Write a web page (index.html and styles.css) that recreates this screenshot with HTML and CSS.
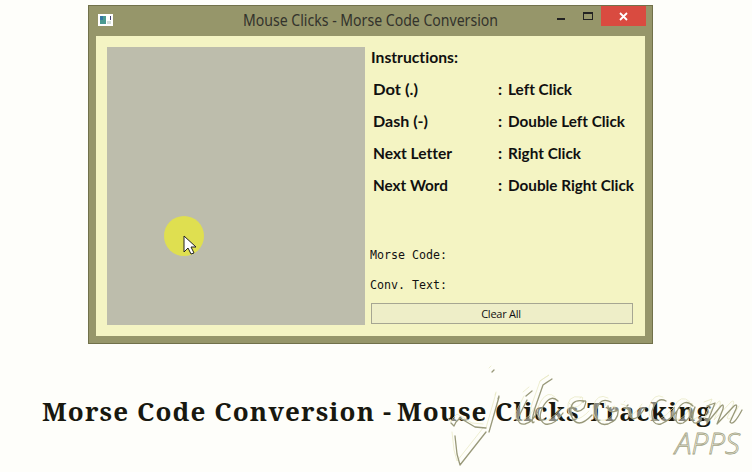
FILE: index.html
```html
<!DOCTYPE html>
<html lang="en">
<head>
<meta charset="utf-8">
<title>Mouse Clicks - Morse Code Conversion</title>
<link rel="stylesheet" href="styles.css">
</head>
<body>
<main class="page">
  <section class="window">
    <header class="titlebar">
      <svg class="app-icon" width="15" height="12" viewBox="0 0 15 12"><path fill="#fff" d="M0 0h15v12H0z"/><path fill="#4b9a91" d="M2 2h6v8H2z"/><path fill="#3677a3" d="M2 2h3v4H2z"/><path fill="#d5dfdc" d="M9 7h4v3H9z"/><path fill="#447" d="M12 2h1v4h-1z"/></svg>
      <h1 class="title"><svg width="264" height="27"><text x="0" y="17" textLength="255" lengthAdjust="spacingAndGlyphs">Mouse Clicks - Morse Code Conversion</text></svg></h1>
      <div class="controls">
        <span class="minimize"></span><span class="maximize"></span>
        <span class="close"><svg width="9" height="9" viewBox="0 0 9 9"><path d="M1 1l7 7M8 1L1 8" stroke="#fff" stroke-width="1.8"/></svg></span>
      </div>
    </header>
    <div class="client">
      <div class="click-area">
        <div class="pointer"><svg width="14" height="20" viewBox="0 0 14 20"><path d="M1 1v16l4-4 3 6 3-1-3-6h5z" fill="#fff" stroke="#222" stroke-width="1"/></svg></div>
      </div>
      <div class="side">
        <svg class="instructions" width="270" height="160">
          <text x="1" y="16" textLength="87" lengthAdjust="spacingAndGlyphs">Instructions:</text>
          <text x="3" y="48" textLength="45" lengthAdjust="spacingAndGlyphs">Dot (.)</text><text x="128" y="48">:</text><text x="138" y="48" textLength="64" lengthAdjust="spacingAndGlyphs">Left Click</text>
          <text x="3" y="80" textLength="55" lengthAdjust="spacingAndGlyphs">Dash (-)</text><text x="128" y="80">:</text><text x="138" y="80" textLength="117" lengthAdjust="spacingAndGlyphs">Double Left Click</text>
          <text x="3" y="112" textLength="79" lengthAdjust="spacingAndGlyphs">Next Letter</text><text x="128" y="112">:</text><text x="138" y="112" textLength="73" lengthAdjust="spacingAndGlyphs">Right Click</text>
          <text x="3" y="144" textLength="75" lengthAdjust="spacingAndGlyphs">Next Word</text><text x="128" y="144">:</text><text x="138" y="144" textLength="126" lengthAdjust="spacingAndGlyphs">Double Right Click</text>
        </svg>
        <svg class="output" width="270" height="50">
          <text x="0" y="12" textLength="77" lengthAdjust="spacingAndGlyphs">Morse Code:</text>
          <text x="0" y="42" textLength="77" lengthAdjust="spacingAndGlyphs">Conv. Text:</text>
        </svg>
        <button class="clear">Clear All</button>
      </div>
    </div>
  </section>
  <h2 class="caption"><svg width="752" height="50"><text x="42" y="34" textLength="349">Morse Code Conversion -</text><text x="397" y="34" textLength="314">Mouse Clicks Tracking</text></svg></h2>
  <svg class="watermark" width="310" height="108" viewBox="442 364 310 108">
    <defs>
      <g id="mark">
        <path d="M494 370l-2 2M499 396l-1 3M451 423l3 3 2-4 4-4 15 9 11 1M499 397l-10 35M455 436l2 18 3 11 26-33M543 385q4-3 9-6l-9 6-8 23q-5 18-1 14M532 391l-6 5M527 400l-9 18q0 7 7 6 8-2 12-12M558 401q-7-7-14 4-8 14 1 19 9 2 18-11M583 402q5-4 1 6-7 7-12-1M584 401q-15-3-13 14 6 16 21 0M611 402q-11-6-15 9 0 16 12 13 11-4 10-14-10 5-10-4M627 406l1-1M624 408q7 0 7 9 4 6 14-9M666 401q-9-5-14 10-1 15 9 13 9-4 16-13M693 406q-9-9-16 5-4 15 6 12 8-5 12-16-7 22 6 14M707 406l8-3-8 20 14-17q3-3 2 3l-6 15 17-18q4-3 2 3l-6 13q3 5 12-12"/>
      </g>
    </defs>
    <use href="#mark" class="mark-body" x="-1" y="-2"/>
    <use href="#mark" class="mark-light" x="-3" y="-4"/>
    <use href="#mark" class="mark-edge"/>
    <text class="apps" x="675" y="454" textLength="65" lengthAdjust="spacingAndGlyphs">APPS</text>
  </svg>
</main>
</body>
</html>
```
FILE: styles.css
```css
* { box-sizing: border-box; }
body { margin: 0; background: #fefefa; font-family: "Open Sans", sans-serif; }
.page { position: relative; width: 752px; height: 472px; padding: 5px 0 0 88px; overflow: hidden; }
.window { width: 565px; height: 339px; padding: 0 7px 7px; border: 1px solid #71714a; background: #96966a; display: flex; flex-direction: column; }
.titlebar { height: 30px; flex: none; display: flex; align-items: flex-start; }
.app-icon { margin: 8px 0 0 2px; flex: none; }
.title { margin: 3px 0 0 130px; width: 264px; height: 27px; font-size: 15px; line-height: 27px; flex: none; }
.title svg { display: block; overflow: visible; }
.title text { font: 400 15.5px "Noto Sans", sans-serif; fill: #33332c; }
.controls { display: flex; margin-left: auto; height: 20px; }
.minimize { width: 8px; height: 2px; margin: 12px 18px 0 0; background: #222; }
.maximize { width: 10px; height: 8px; margin: 6px 8px 0 0; border: 1px solid #222; border-top-width: 2px; }
.close { width: 45px; height: 20px; margin-right: -1px; background: #d94b40; display: flex; align-items: center; justify-content: center; }
.client { flex: 1; display: flex; padding: 11px 0 11px 11px; background: #f4f4c3; }
.click-area { width: 258px; height: 278px; flex: none; background: #bdbdac; }
.pointer { width: 40px; height: 40px; margin: 169px 0 0 57px; border-radius: 50%; background: #dfdf50; padding: 19px 0 0 19px; }
.pointer svg { display: block; overflow: visible; }
.side { width: 270px; margin-left: 5px; flex: none; display: flex; flex-direction: column; }
.instructions { flex: none; font: 700 16px Lato, sans-serif; font-variant-ligatures: none; fill: #101010; }
.output { flex: none; margin-top: 40px; font: 12px "DejaVu Sans Mono", monospace; fill: #111; }
.clear { width: 262px; height: 21px; margin: 6px 0 0 1px; padding: 0 2px 0 0; border: 1px solid #a6a692; background: #eeeec8; color: #111; font: 11px "Open Sans", sans-serif; letter-spacing: -.25px; }
.caption { width: 752px; height: 50px; margin: 43px 0 0 -88px; line-height: 0; }
.caption text { font: 700 26px "Noto Serif", "DejaVu Serif", serif; fill: #18180f; }
.watermark { position: absolute; left: 442px; top: 364px; }
.watermark use { fill: none; stroke-linecap: round; stroke-linejoin: round; }
.mark-body { stroke: rgba(254,254,249,.48); stroke-width: 4; }
.mark-light { stroke: #e7e7c0; stroke-width: .7; }
.mark-edge { stroke: #99997a; stroke-width: 1.3; }
.apps { font: italic 300 30px "Open Sans", sans-serif; fill: #fdfdf5; stroke: #a3a384; stroke-width: .8; }
```
